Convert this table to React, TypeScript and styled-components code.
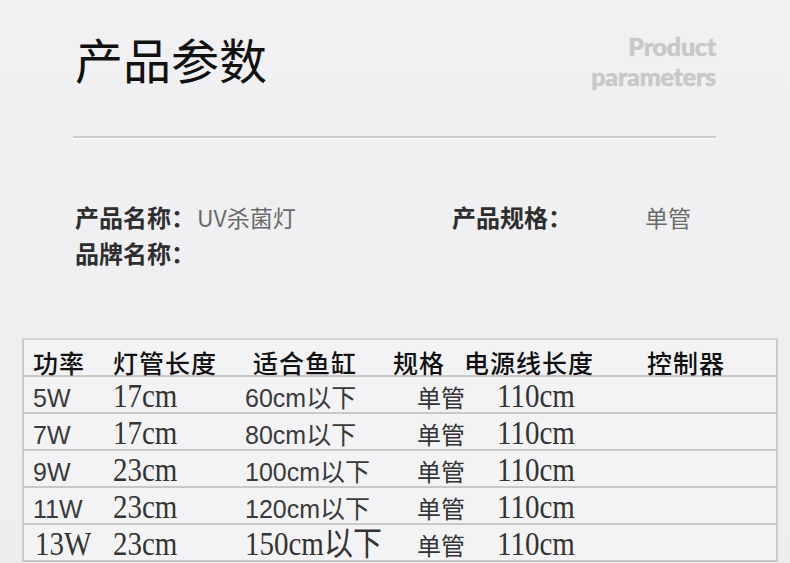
import { createGlobalStyle, styled } from "styled-components";

const GlobalStyle = createGlobalStyle`
  html, body {
    margin: 0;
    padding: 0;
    background: #f0f0f2;
  }
  body {
    font-family: "Noto Sans CJK SC", "Noto Sans", sans-serif;
  }
`;

const Page = styled.div`
  width: 790px;
  height: 563px;
  overflow: hidden;
  background: linear-gradient(180deg, #f1f1f3 0%, #eeeef0 100%);
`;

const Header = styled.header`
  display: flex;
  justify-content: space-between;
  align-items: flex-start;
  padding: 31px 74px 0 75px;
`;

const Title = styled.h1`
  margin: 3px 0 0;
  font-size: 48px;
  line-height: 1;
  font-weight: 400;
  color: #111;
`;

const EnglishTitle = styled.div`
  font-family: Lato, "Noto Sans", sans-serif;
  font-weight: 900;
  font-size: 25px;
  line-height: 30px;
  text-align: right;
  color: #c8c8c8;
  letter-spacing: -0.2px;
  -webkit-text-stroke: 0.5px #c8c8c8;
`;

const Divider = styled.hr`
  margin: 45px 74px 0 73px;
  height: 2px;
  border: none;
  background: #cbcbcb;
  box-shadow: 0 1px 1px rgba(255, 255, 255, 0.9);
`;

const Info = styled.div`
  display: grid;
  grid-template-columns: 122px 255px 193px 1fr;
  margin: 61px 0 0 75px;
  line-height: 36px;
  font-size: 23px;
`;

const Label = styled.span`
  font-size: 24px;
  font-weight: 700;
  color: #2e2e2e;
`;

const Value = styled.span`
  color: #6a6a6a;
`;

const Table = styled.div`
  margin: 67px 0 0 22px;
  width: 756px;
  box-sizing: border-box;
  border-top: 2px solid #d2d2d2;
  border-left: 2px solid #cbcbcb;
  border-right: 2px solid #cbcbcb;
  background: #f3f3f5;
`;

const Row = styled.div<{ $head?: boolean }>`
  display: grid;
  grid-template-columns: 82px 135px 148px 72px 180px 1fr;
  align-items: ${({ $head }) => ($head ? "start" : "baseline")};
  height: 37px;
  box-sizing: border-box;
  padding-top: ${({ $head }) => ($head ? "10px" : "6px")};
  border-bottom: 2px solid #c8c8c8;
  white-space: nowrap;
`;

const HeadCell = styled.div<{ $pad: number }>`
  padding-left: ${({ $pad }) => $pad}px;
  font-size: 25px;
  line-height: 1;
  font-weight: 500;
  letter-spacing: 1px;
  color: #111;
`;

type Font = "sans" | "serif" | "cjk";

const Cell = styled.div<{ $pad: number; $font: Font }>`
  padding-left: ${({ $pad }) => $pad}px;
  line-height: 1;
  color: ${({ $font }) => ($font === "sans" ? "#3a3a3a" : "#333")};
  font-family: ${({ $font }) =>
    $font === "serif"
      ? `"Liberation Serif", "Noto Sans CJK SC", serif`
      : $font === "sans"
      ? `"Liberation Sans", "Noto Sans CJK SC", sans-serif`
      : `"Noto Sans CJK SC", sans-serif`};
  font-size: ${({ $font }) =>
    $font === "serif" ? "29px" : $font === "sans" ? "25px" : "24px"};
  transform: ${({ $font }) => ($font === "serif" ? "scaleY(1.14)" : "none")};
  transform-origin: 0 85%;
`;

const headers: [string, number][] = [
  ["功率", 9],
  ["灯管长度", 7],
  ["适合鱼缸", 12],
  ["规格", 4],
  ["电源线长度", 3],
  ["控制器", 6],
];

const rows: { power: [string, Font]; tube: string; tank: [string, Font] }[] = [
  { power: ["5W", "sans"], tube: "17cm", tank: ["60cm以下", "sans"] },
  { power: ["7W", "sans"], tube: "17cm", tank: ["80cm以下", "sans"] },
  { power: ["9W", "sans"], tube: "23cm", tank: ["100cm以下", "sans"] },
  { power: ["11W", "sans"], tube: "23cm", tank: ["120cm以下", "sans"] },
  { power: ["13W", "serif"], tube: "23cm", tank: ["150cm以下", "serif"] },
];

const App = () => {
  return (
    <Page>
      <GlobalStyle />
      <Header>
        <Title>产品参数</Title>
        <EnglishTitle>
          Product
          <br />
          parameters
        </EnglishTitle>
      </Header>
      <Divider />
      <Info>
        <Label>产品名称：</Label>
        <Value>UV杀菌灯</Value>
        <Label>产品规格：</Label>
        <Value>单管</Value>
        <Label>品牌名称：</Label>
        <Value />
      </Info>
      <Table>
        <Row $head>
          {headers.map(([text, pad]) => (
            <HeadCell key={text} $pad={pad}>
              {text}
            </HeadCell>
          ))}
        </Row>
        {rows.map((r) => (
          <Row key={r.power[0]}>
            <Cell $pad={r.power[1] === "serif" ? 11 : 9} $font={r.power[1]}>
              {r.power[0]}
            </Cell>
            <Cell $pad={7} $font="serif">
              {r.tube}
            </Cell>
            <Cell $pad={4} $font={r.tank[1]}>
              {r.tank[0]}
            </Cell>
            <Cell $pad={28} $font="cjk">
              单管
            </Cell>
            <Cell $pad={36} $font="serif">
              110cm
            </Cell>
            <Cell $pad={0} $font="sans" />
          </Row>
        ))}
      </Table>
    </Page>
  );
};

export default App;
